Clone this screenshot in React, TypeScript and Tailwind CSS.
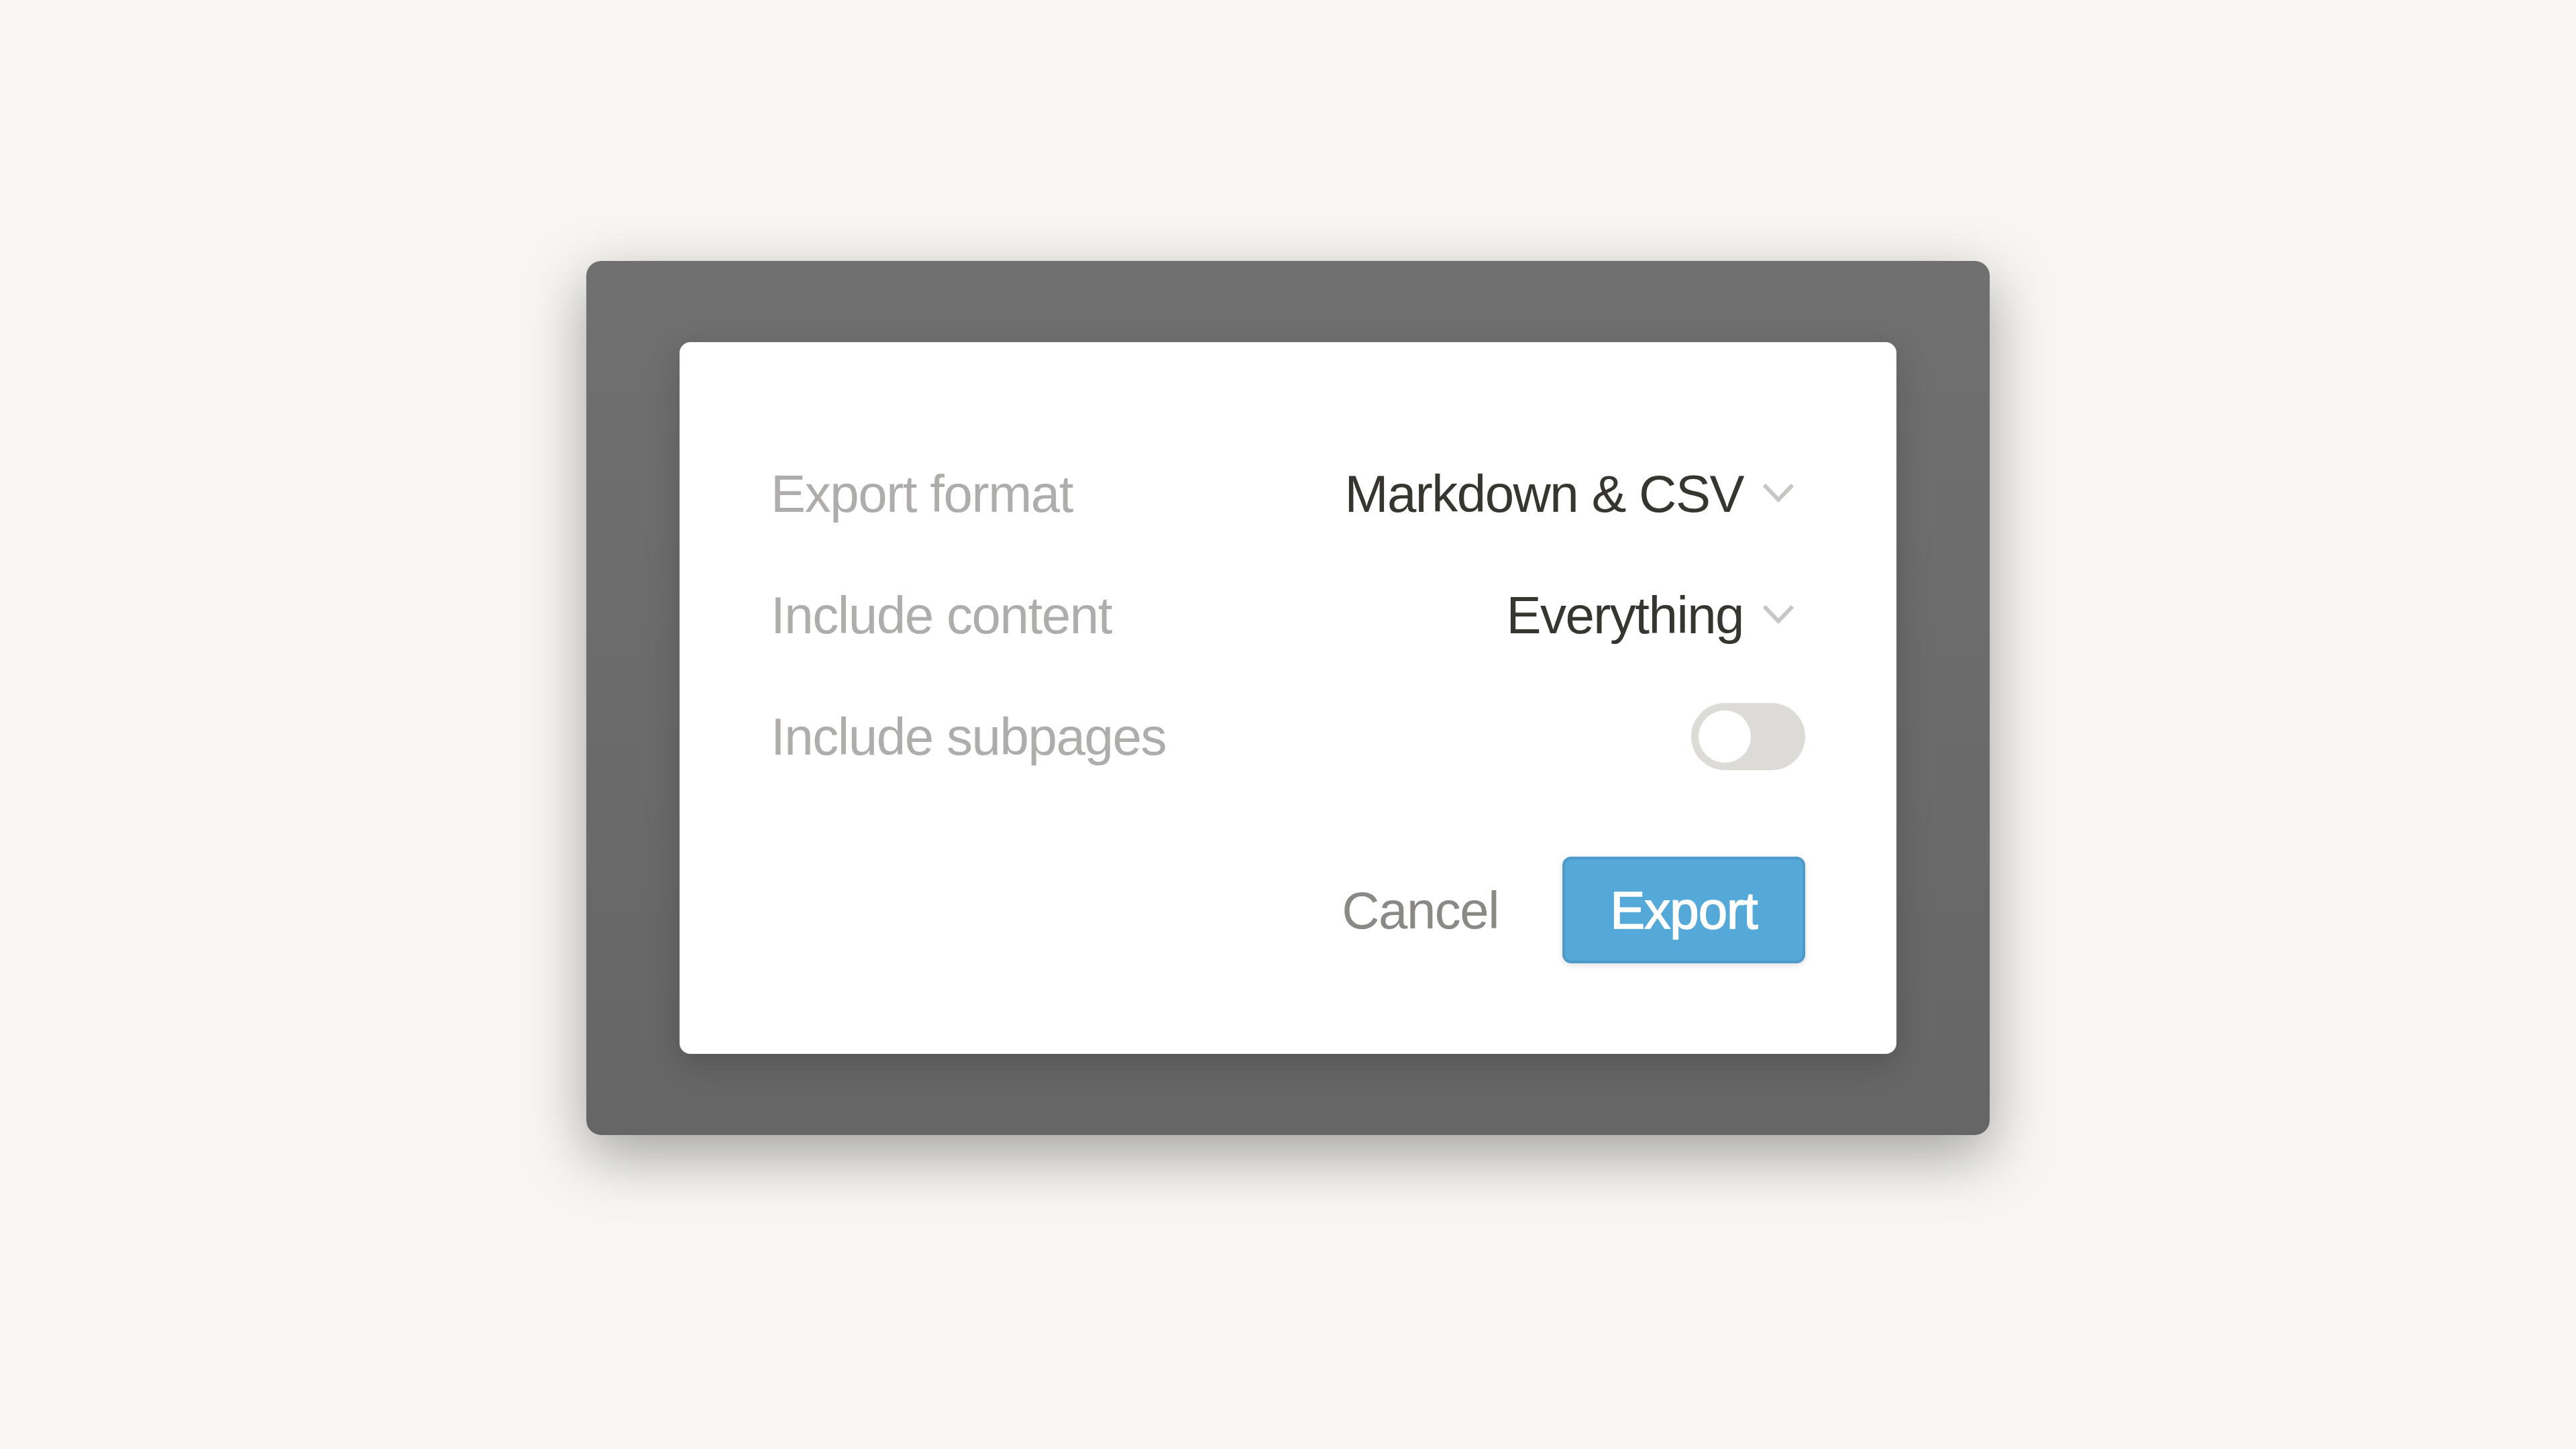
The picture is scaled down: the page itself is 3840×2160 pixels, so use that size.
import React from 'react';

const font = { fontFamily: '"Liberation Sans", Arial, sans-serif' };

const Chevron: React.FC = () => (
  <svg width="48" height="32" viewBox="0 0 48 32" className="ml-[28px] mr-[16px] -mt-[4px] shrink-0">
    <path d="M3 5 L24 27 L45 5" fill="none" stroke="#c6c6c4" strokeWidth="6" />
  </svg>
);

interface RowProps {
  label: string;
  children: React.ReactNode;
}

const Row: React.FC<RowProps> = ({ label, children }) => (
  <div className="flex h-[181px] items-center justify-between">
    <span className="text-[78px] leading-[90px] tracking-[-1.4px] text-[#aeadab]">{label}</span>
    <div className="flex items-center">{children}</div>
  </div>
);

const Toggle: React.FC = () => (
  <div className="flex h-[100px] w-[170px] items-center rounded-full bg-[#dcdbd7] px-[11px]">
    <div className="h-[78px] w-[78px] rounded-full bg-white" />
  </div>
);

export default function App() {
  return (
    <div className="flex h-screen w-full items-center justify-center bg-[#f7f6f3] pb-[79px]" style={font}>
      {/* marco oscuro */}
      <div className="rounded-[22px] bg-linear-to-b from-[#707070] to-[#666666] px-[139px] py-[121px] shadow-[0_30px_90px_rgba(0,0,0,0.35)]">
        <div className="w-[1814px] rounded-[16px] bg-white px-[136px] pb-[135px] pt-[135px] shadow-[0_16px_50px_rgba(0,0,0,0.18)]">
          <Row label="Export format">
            <span className="text-[78px] leading-[90px] tracking-[-1.5px] text-[#37352f]">Markdown &amp; CSV</span>
            <Chevron />
          </Row>
          <Row label="Include content">
            <span className="text-[78px] leading-[90px] tracking-[-1.5px] text-[#37352f]">Everything</span>
            <Chevron />
          </Row>
          <Row label="Include subpages">
            <Toggle />
          </Row>

          <div className="mt-[89px] flex items-center justify-end gap-[95px]">
            <span className="text-[78px] leading-[90px] tracking-[-1.5px] text-[#8a8985]">Cancel</span>
            <button
              type="button"
              className="flex h-[159px] w-[362px] items-center justify-center rounded-[13px] border-[4px] border-[#4e9acb] bg-[#55a9d9] text-[78px] leading-[90px] tracking-[-1px] text-white shadow-[0_3px_8px_rgba(0,0,0,0.12)] [-webkit-text-stroke:1.5px_white]"
            >
              Export
            </button>
          </div>
        </div>
      </div>
    </div>
  );
}
